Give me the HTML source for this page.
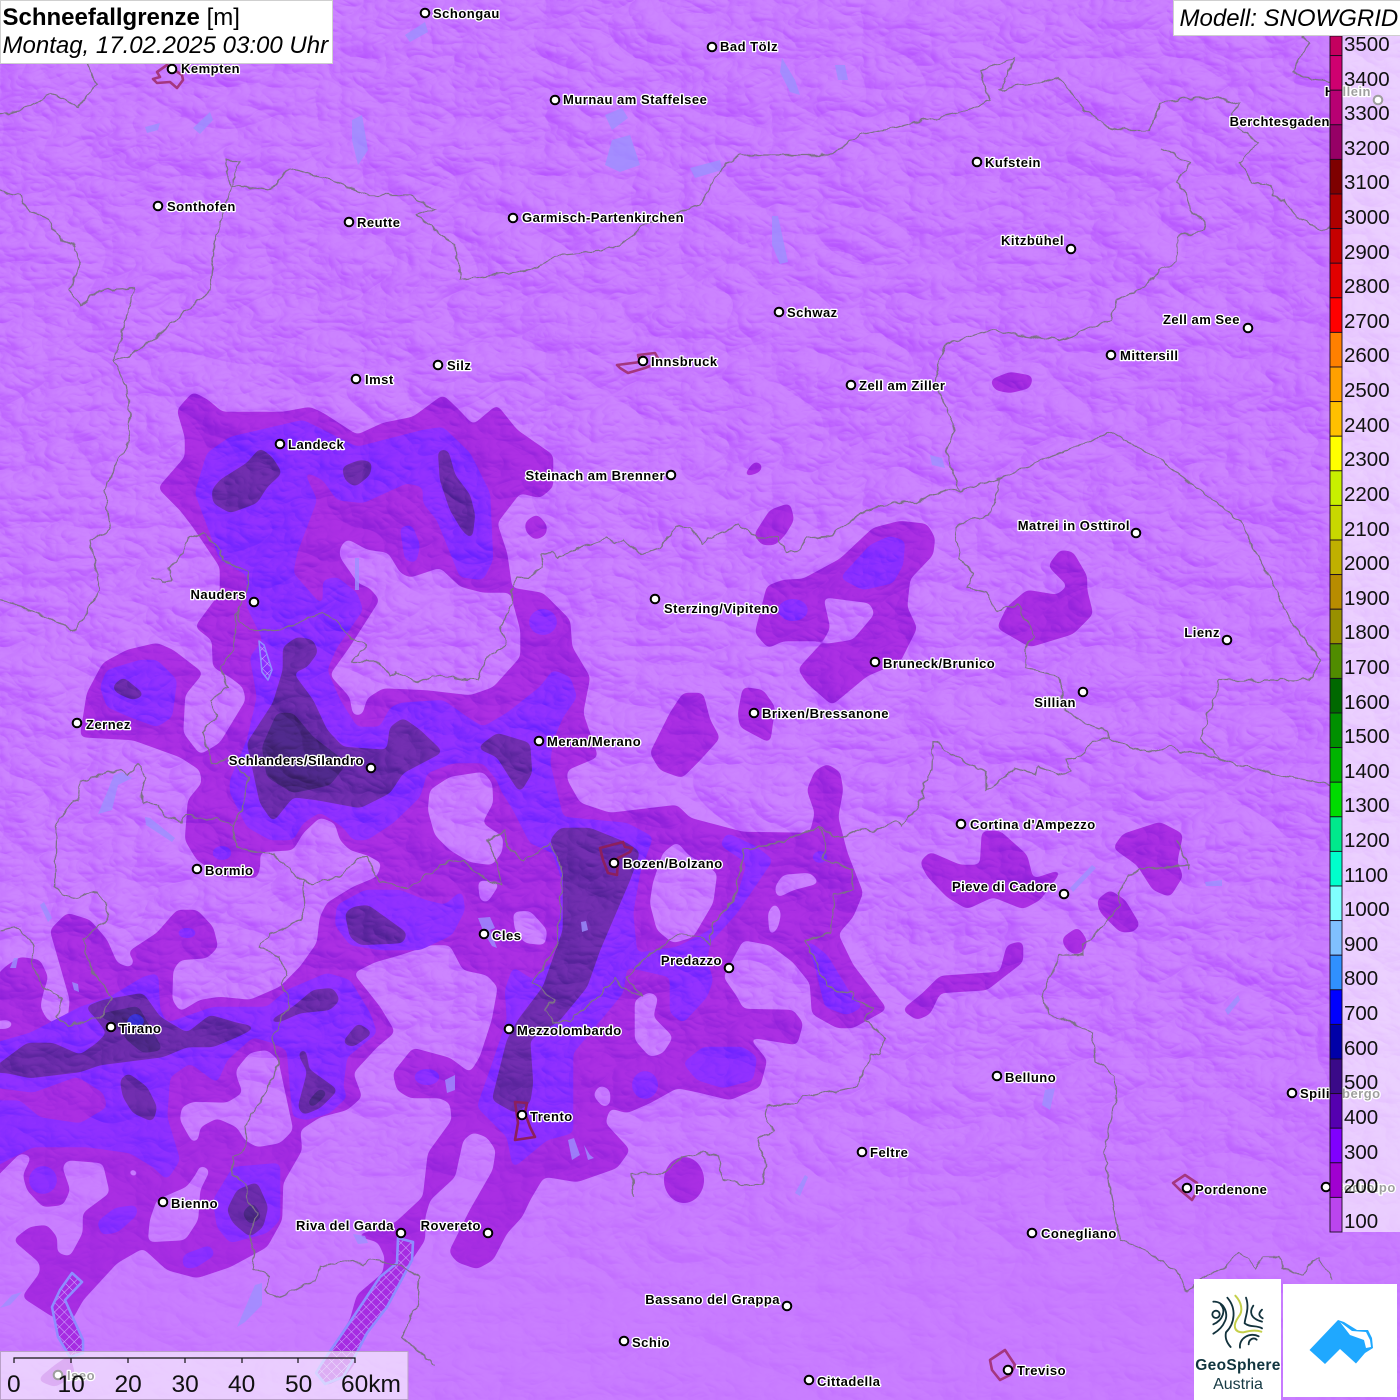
<!DOCTYPE html>
<html><head><meta charset="utf-8"><title>Schneefallgrenze</title>
<style>
html,body{margin:0;padding:0;background:#c87bff;width:1400px;height:1400px;overflow:hidden}
svg{display:block;font-family:"Liberation Sans",sans-serif}
.c text{font:bold 13px "Liberation Sans",sans-serif;letter-spacing:.5px;fill:#000;stroke:#fff;stroke-width:2.6px;paint-order:stroke;stroke-linejoin:round}
.d circle{fill:#fff;stroke:#000;stroke-width:2;r:4.3px}
.b{fill:none;stroke:#7d7088;stroke-width:1.25;stroke-linejoin:round}
.t{fill:none;stroke:#a4367f;stroke-width:2.6;stroke-linejoin:round}
.l{fill:#9c90ff;opacity:.8}
</style></head><body>
<svg width="1400" height="1400" viewBox="0 0 1400 1400" xmlns="http://www.w3.org/2000/svg">
<defs>
<filter id="g" filterUnits="userSpaceOnUse" x="-20" y="-20" width="1440" height="1440" color-interpolation-filters="sRGB">
<feGaussianBlur stdDeviation="3.1"/>
<feColorMatrix values="1 0 0 0 0 0 1 0 0 0 0 0 1 0 0 0 0 0 16 -7"/>
</filter>
<filter id="h" filterUnits="userSpaceOnUse" x="0" y="0" width="1400" height="1400" color-interpolation-filters="sRGB">
<feTurbulence type="turbulence" baseFrequency="0.011 0.017" numOctaves="4" seed="11" result="n"/>
<feDiffuseLighting in="n" surfaceScale="11" diffuseConstant="1" lighting-color="#9c9c9c"><feDistantLight azimuth="315" elevation="55"/></feDiffuseLighting>
</filter>
<filter id="j" filterUnits="userSpaceOnUse" x="-10" y="-10" width="1420" height="1420">
<feTurbulence type="fractalNoise" baseFrequency="0.09" numOctaves="2" seed="3" result="w"/>
<feDisplacementMap in="SourceGraphic" in2="w" scale="7" xChannelSelector="R" yChannelSelector="G"/>
</filter>
<linearGradient id="fade" x1="0" y1="0" x2="0" y2="1"><stop offset="0" stop-color="#fff"/><stop offset=".72" stop-color="#fff"/><stop offset=".92" stop-color="#555"/></linearGradient>
<mask id="m"><rect width="1400" height="1400" fill="url(#fade)"/></mask>
<pattern id="x" width="7" height="7" patternUnits="userSpaceOnUse" patternTransform="rotate(45)">
<path d="M0 0H7M0 0V7" stroke="#d0b0ff" stroke-width="1" fill="none"/></pattern>
</defs>

<rect width="1400" height="1400" fill="#c87bff"/>

<!-- 200 level -->
<g fill="#a62ce2" filter="url(#g)">
<polygon points="177,410 193,392 208,400 222,412 283,412 310,407 323,413 357,435 383,423 413,417 443,395 457,408 473,425 497,405 517,430 553,455 553,487 540,498 520,493 497,523 507,553 512,588 543,593 570,620 572,647 590,677 583,713 598,757 567,770 567,780 580,803 610,813 677,805 690,818 743,832 810,833 815,813 807,790 815,771 827,764 840,772 843,790 838,817 847,852 863,893 853,917 838,934 853,965 887,1009 853,1028 837,1028 812,1014 810,983 793,962 770,945 743,940 723,977 737,997 743,1009 793,1010 803,1023 797,1045 748,1037 767,1060 760,1087 730,1100 697,1092 677,1088 650,1103 627,1113 610,1108 605,1123 630,1150 617,1168 577,1182 547,1177 543,1178 530,1200 522,1217 507,1233 493,1260 477,1269 457,1262 449,1252 470,1210 493,1170 496,1150 487,1137 473,1132 463,1140 458,1163 455,1177 430,1200 425,1217 425,1240 407,1267 390,1292 367,1335 350,1355 325,1358 350,1320 357,1295 383,1273 385,1257 378,1242 353,1235 368,1232 395,1223 423,1197 428,1153 452,1120 450,1103 440,1098 410,1098 397,1090 393,1073 413,1048 450,1058 470,1073 480,1057 492,1020 498,987 487,975 463,970 450,945 430,945 400,955 375,962 353,973 380,1007 395,1032 377,1047 353,1073 362,1097 347,1110 320,1117 300,1130 302,1150 283,1183 282,1220 267,1247 230,1267 197,1278 167,1270 143,1248 117,1263 83,1300 72,1320 53,1317 22,1297 40,1273 40,1263 13,1240 30,1227 47,1225 57,1237 57,1253 70,1257 83,1233 83,1213 110,1193 103,1163 67,1160 62,1167 70,1190 63,1205 43,1207 27,1190 23,1175 32,1156 20,1153 -12,1185 -12,985 5,967 20,957 40,960 48,977 43,993 40,1007 47,1020 67,1028 70,1000 60,965 50,930 67,913 90,920 107,940 117,963 130,968 135,962 128,952 157,933 177,910 197,910 213,927 218,947 207,958 180,960 173,970 172,1000 180,1012 200,1000 220,997 250,1000 280,987 300,967 317,943 320,917 327,903 353,887 377,877 382,863 367,855 350,850 340,840 335,823 320,817 303,833 293,850 260,852 260,867 257,878 223,877 197,860 185,840 188,800 202,783 200,770 180,757 133,740 80,737 87,693 103,663 127,650 157,643 173,650 203,673 185,695 183,733 200,755 220,743 246,700 243,687 230,677 213,667 212,640 195,627 220,593 220,567 193,527 180,510 158,488 185,457 185,437"/>
<polygon points="537,514 547,525 546,535 535,540 526,532 525,522"/>
<polygon points="412,640 425,625 433,633 425,643 415,645"/>
<polygon points="990,380 1010,372 1033,376 1030,388 1010,393 995,390"/>
<polygon points="743,476 755,461 763,465 760,472 745,477"/>
<polygon points="754,535 770,510 790,503 794,520 785,535 775,545 762,545"/>
<polygon points="650,753 670,713 683,693 703,693 710,720 720,738 700,760 682,778 660,770"/>
<polygon points="738,713 743,687 763,690 775,707 770,743 740,727"/>
<polygon points="755,633 767,586 783,580 803,579 840,559 873,528 900,521 927,524 935,538 933,555 910,579 907,607 917,628 900,662 867,676 832,705 807,683 798,669 820,645 853,640 875,614 870,603 823,597 830,628 823,641 783,641 768,648"/>
<polygon points="1048,566 1060,550 1073,552 1087,576 1087,590 1093,614 1073,634 1030,647 997,628 1007,607 1027,590 1057,595 1068,586"/>
<polygon points="920,862 930,852 960,865 980,865 982,831 1000,831 1027,855 1033,879 1063,869 1040,900 1023,909 993,897 967,909 947,897 927,876"/>
<polygon points="1113,848 1123,834 1160,822 1183,834 1177,862 1183,876 1170,897 1153,890 1137,865"/>
<polygon points="1097,900 1110,890 1125,900 1140,925 1133,932 1120,932 1100,912"/>
<polygon points="1062,938 1078,927 1087,940 1085,950 1075,955 1065,948"/>
<polygon points="902,1010 923,993 940,976 1000,972 1007,945 1023,941 1023,962 987,990 940,993 930,1014 917,1020"/>
<ellipse cx="684" cy="1180" rx="20" ry="23"/>
<polygon points="37,1380 55,1365 70,1355 75,1375 55,1387"/>
<polygon points="316,1368 345,1350 357,1360 345,1377 325,1386"/>
</g>
<!-- holes in 200 -->
<g fill="#c87bff" filter="url(#g)">
<polygon points="340,548 347,539 367,550 388,553 400,573 410,578 440,568 460,587 483,593 510,593 520,630 520,657 493,687 470,695 427,690 383,688 367,698 362,715 353,715 350,697 330,675 350,647 380,600 370,588 358,583 340,557"/>
<polygon points="428,810 430,790 450,777 483,772 492,783 493,803 482,823 503,837 502,852 492,865 470,862 450,850 435,835"/>
<polygon points="478,880 500,883 487,903 480,900"/>
<polygon points="513,912 530,911 547,930 545,945 525,943 515,930"/>
<polygon points="650,903 653,883 663,853 677,842 688,855 717,873 713,903 693,937 673,943 657,930"/>
<polygon points="635,1000 650,992 658,997 653,1017 673,1037 663,1053 650,1057 635,1040"/>
<polygon points="593,1095 600,1085 610,1090 610,1105 603,1107"/>
<polygon points="775,887 783,875 810,873 820,883 793,890 777,898"/>
<polygon points="768,913 775,902 781,913 778,927 770,938"/>
<polygon points="127,1172 133,1168 140,1175 133,1177"/>
<polygon points="236,1070 250,1053 267,1050 278,1060 293,1130 280,1143 257,1147 245,1140 237,1127 217,1118 200,1127 198,1140 193,1143 180,1120 182,1107 193,1102 227,1103 243,1093 237,1077"/>
<polygon points="200,1165 210,1170 200,1190 198,1220 185,1240 148,1242 150,1220 157,1200 187,1187 197,1173"/>
<polygon points="-12,1022 10,1020 14,1026 5,1029 -12,1028"/>
</g>
<!-- 300 level -->
<g fill="#8a2eff" filter="url(#g)">
<polygon points="195,493 207,453 230,437 303,420 357,447 423,430 443,427 470,453 490,493 493,560 483,580 460,577 437,520 423,503 423,487 407,483 363,503 337,500 323,480 303,470 317,500 297,553 293,573 323,607 323,580 337,577 357,593 363,610 340,643 337,647 327,670 340,700 357,727 380,727 390,708 400,703 443,700 467,717 483,727 507,713 540,687 553,670 570,677 577,697 563,717 553,740 550,763 563,817 627,823 653,837 640,873 633,913 637,953 677,947 710,930 737,897 747,863 720,845 727,833 757,847 773,860 737,913 710,943 707,960 713,980 707,997 683,1023 670,1013 670,977 627,967 623,993 590,1033 573,1053 573,1133 547,1140 513,1168 507,1137 477,1107 490,1070 507,1020 505,990 513,967 533,980 557,957 560,913 562,880 553,853 530,843 503,790 510,813 497,780 483,763 453,763 427,773 420,797 393,823 367,840 353,840 343,827 320,812 303,823 293,840 270,840 247,827 230,793 230,780 247,740 257,697 250,657 263,640 247,607 247,575 220,560"/>
<polygon points="337,905 365,890 400,890 425,900 445,905 462,890 465,910 452,935 420,950 380,950 350,945 335,925"/>
<polygon points="400,527 412,525 420,545 416,563 405,560"/>
<polygon points="100,687 107,670 140,660 157,660 177,680 172,717 157,727 130,717 107,707"/>
<ellipse cx="222" cy="853" rx="10" ry="7"/>
<ellipse cx="543" cy="622" rx="14" ry="13"/>
<polygon points="840,578 870,545 890,536 905,541 903,565 893,583 863,590"/>
<ellipse cx="793" cy="610" rx="15" ry="11"/>
<polygon points="805,938 827,955 850,993 863,1007 847,1015 825,1007 815,966"/>
<polygon points="683,1063 703,1047 743,1047 757,1057 753,1080 723,1088 697,1080"/>
<ellipse cx="645" cy="1085" rx="13" ry="14"/>
<ellipse cx="820" cy="857" rx="8" ry="6"/>
<polygon points="-12,1045 30,1033 80,1007 110,997 143,977 158,973 160,1010 167,1023 213,1007 267,1007 287,990 327,973 350,980 370,1013 377,1033 347,1057 343,1087 347,1097 330,1113 307,1120 293,1117 290,1087 287,1050 273,1043 253,1037 227,1060 217,1083 190,1063 170,1077 167,1117 180,1160 167,1180 153,1167 130,1153 87,1147 33,1147 -12,1170"/>
<polygon points="213,1200 233,1167 280,1163 280,1220 267,1233 230,1243 217,1227"/>
<polygon points="97,1222 115,1208 137,1205 137,1215 118,1232 102,1235"/>
<ellipse cx="43" cy="1180" rx="14" ry="14"/>
<polygon points="183,1255 210,1245 215,1255 195,1268 183,1268"/>
<ellipse cx="187" cy="933" rx="10" ry="5"/>
<ellipse cx="427" cy="1077" rx="13" ry="8"/>
</g>
<g fill="#a62ce2" filter="url(#g)">
<polygon points="-12,1087 33,1093 77,1077 103,1093 107,1107 80,1123 40,1117 20,1100 -12,1100"/>
</g>
<!-- 400 level -->
<g fill="#6b2bab" filter="url(#g)">
<polygon points="212,490 220,480 247,463 260,448 272,457 282,473 267,487 257,503 230,513 213,503"/>
<polygon points="342,467 360,460 372,462 370,475 355,487 345,480"/>
<polygon points="438,450 448,450 455,475 470,495 475,515 472,540 462,530 450,510 440,480"/>
<polygon points="283,647 297,637 313,640 318,652 307,667 293,673 313,700 327,730 343,747 387,750 390,727 403,718 420,730 443,752 403,773 390,793 360,808 317,800 293,797 273,822 260,803 247,743 273,703 283,670"/>
<polygon points="477,748 497,733 530,743 532,773 520,793 507,773 497,757"/>
<polygon points="550,840 560,828 590,828 627,843 640,852 630,880 600,950 587,987 560,1020 530,1040 533,1083 530,1103 515,1113 492,1100 507,1040 518,1020 543,987 563,930 563,873"/>
<polygon points="345,913 353,907 368,905 407,933 403,943 360,945 350,937"/>
<polygon points="-12,1072 27,1043 53,1043 80,1055 97,1043 107,1033 95,1017 85,1007 103,1000 143,993 160,1017 187,1033 210,1015 237,1023 257,1027 237,1037 213,1047 187,1047 163,1057 100,1065 80,1072 30,1078 7,1073"/>
<polygon points="120,1080 128,1073 147,1087 157,1107 153,1122 133,1113 123,1097"/>
<polygon points="265,1023 293,1007 313,990 333,988 340,1000 330,1010 300,1013 280,1022"/>
<polygon points="342,1043 358,1023 373,1033 353,1047"/>
<polygon points="298,1107 307,1073 298,1053 305,1048 310,1070 338,1090 320,1108 303,1115"/>
<polygon points="227,1210 237,1190 257,1182 268,1207 263,1227 250,1237 233,1223"/>
<polygon points="112,687 123,677 145,695 133,700 117,693"/>
</g>
<!-- 500 level -->
<g fill="#4b2785" filter="url(#g)">
<polygon points="262,747 277,713 293,713 313,737 347,763 330,785 293,793 267,777"/>
<polygon points="95,1015 138,1006 163,1050 143,1053 127,1040 115,1023"/>
<polygon points="307,1103 320,1088 328,1093 312,1108"/>
<polygon points="242,1213 253,1202 262,1217 250,1225"/>
</g>
<g fill="#3a30d4" filter="url(#g)"><polygon points="125,1023 132,1014 140,1014 146,1023 135,1029"/></g>

<!-- hillshade -->
<rect width="1400" height="1400" filter="url(#h)" opacity=".34" mask="url(#m)" style="mix-blend-mode:overlay"/>

<!-- lakes -->
<g class="l">
<polygon points="145,127 160,123 158,130 147,133"/><polygon points="193,128 210,112 213,120 200,134"/>
<polygon points="352,120 362,115 368,150 358,165 352,140"/><polygon points="605,165 612,140 630,135 640,165 620,172"/>
<polygon points="605,115 622,108 628,118 612,130"/><polygon points="782,58 795,80 800,95 790,92 780,72"/>
<polygon points="835,65 845,65 848,80 838,80"/><polygon points="690,168 720,160 722,170 695,178"/>
<polygon points="772,216 778,216 788,262 780,264 772,245"/><polygon points="405,35 425,22 428,32 410,42"/>
<polygon points="930,455 942,458 945,468 932,465"/><polygon points="1092,865 1096,868 1073,892 1070,888"/>
<polygon points="1045,1090 1055,1088 1050,1110 1042,1105"/><polygon points="1225,1010 1238,995 1240,1000 1228,1015"/>
<polygon points="1205,882 1222,880 1222,886 1206,886"/><polygon points="355,558 359,558 359,590 355,590"/>
<polygon points="114,775 122,772 132,778 118,785 112,810 98,814 108,790"/><polygon points="145,817 150,818 175,838 172,842 146,825"/>
<polygon points="40,905 44,902 52,918 48,922"/><polygon points="795,1193 805,1175 808,1177 800,1196"/>
<polygon points="237,1327 255,1285 262,1283 262,1305 245,1322"/><polygon points="0,1308 12,1295 22,1292 10,1305"/>
<polygon points="478,918 490,917 495,928 490,930 497,948 492,946 484,933"/>
<polygon points="581,922 586,921 588,930 582,932"/><polygon points="568,1140 574,1138 580,1155 572,1160"/>
<polygon points="584,1145 590,1155 594,1158 588,1160"/><polygon points="353,1234 365,1236 368,1243 358,1244"/>
<polygon points="14,958 18,958 16,968 10,968"/><polygon points="72,982 78,984 79,992 74,990"/>
<polygon points="445,1080 455,1075 455,1090 447,1093"/>
</g>
<g fill="#a62ce2">
<polygon points="398,1238 413,1242 412,1260 387,1307 367,1333 353,1360 343,1377 325,1384 316,1373 322,1363 333,1347 350,1322 368,1295 380,1277 397,1263"/>
<polygon points="72,1273 82,1282 65,1300 83,1340 83,1353 70,1357 58,1337 52,1307 60,1290"/>
</g>
<g stroke="#8f8cff" stroke-width="2.6" stroke-linejoin="round" fill="url(#x)">
<polygon points="398,1238 413,1242 412,1260 387,1307 367,1333 353,1360 343,1377 325,1384 316,1373 322,1363 333,1347 350,1322 368,1295 380,1277 397,1263"/>
<polygon points="72,1273 82,1282 65,1300 83,1340 83,1353 70,1357 58,1337 52,1307 60,1290"/>
<polygon points="259,641 264,645 272,670 268,680 262,672" stroke-width="1.6"/>
</g>

<!-- borders -->
<g class="b" filter="url(#j)">
<polyline points="0,190 20,195 30,212 50,220 60,240 75,245 80,265 70,290 80,305 100,290 135,288 130,300 115,360 130,400 128,440 105,490 110,530 90,540 100,590 75,630 30,610 0,600"/>
<polyline points="115,360 130,355 165,330 210,290 215,240 225,205 240,160 225,160 230,185 270,190 290,170 330,180 370,195 410,195 435,210 415,215 455,245 460,280 530,270 560,255 600,250 620,245 645,225 700,205 720,170 740,155 830,155 860,135 970,110 990,100 980,70 1015,58 1000,90 1055,78 1065,85 1085,110 1115,130 1150,130 1160,103 1193,98 1220,98 1240,105 1232,113 1237,127 1258,143 1240,163 1253,183 1270,185 1273,197 1283,200 1297,217 1323,230 1330,227"/>
<polyline points="1303,37 1310,43 1293,70 1303,78 1330,81"/>
<polyline points="1160,148 1190,163 1175,183 1185,190 1190,210 1205,223 1203,230 1177,237 1177,260 1160,272 1140,290 1115,300 1112,320 1060,340 990,330 945,345 935,380 955,430 945,450 960,490 1000,478 995,500 990,515 970,519 955,528 960,559 973,572 967,588 987,593 997,612 1017,603 1030,628 1035,638 1025,648 1025,669 1057,676 1065,710 1087,724 1107,731 1110,738 1148,753 1170,747 1180,753 1190,750 1220,760 1280,775 1330,785"/>
<polyline points="87,63 97,85 87,97 77,107 63,98 50,95 27,108 0,115"/>
<polyline points="1000,478 1080,445 1110,432 1160,460 1200,490 1240,520 1290,620 1320,660 1310,680 1220,680 1200,740 1220,760"/>
<polyline points="512,587 517,577 528,578 542,568 540,555 552,552 558,557 582,547 607,538 615,543 623,538 640,555 660,548 667,537 677,526 690,528 702,543 720,533 740,525 757,537 777,537 787,552 800,550 808,538 833,534 867,510 893,502 915,502 945,490 960,490"/>
<polyline points="150,578 165,583 173,580 168,568 178,562 187,539 203,533 220,550 222,560 248,573 247,593 238,607 240,623 250,630 277,630 293,625 323,613 337,620 350,637 367,645 352,662 377,662 390,675 397,672 417,682 433,675 478,680 487,657 505,645 500,627 512,603 512,588"/>
<polyline points="238,607 233,650 220,667 227,687 210,702 217,715 203,732 212,763 230,760 248,777 243,810 232,827 217,818 207,820 188,815 183,822 165,817 160,805 143,803 142,790 146,778 138,765 128,775 120,770 80,782 78,800 72,802 57,823 55,887 63,895 78,898 95,892 107,903 107,920 83,940 90,967 112,998 100,1017 68,1025 57,1018 62,1000 43,988 32,967 33,943 15,927 0,930"/>
<polyline points="232,827 237,847 250,852 273,853 303,882 312,885 343,875 358,858 367,857 380,883 407,888 450,860 463,860 482,877 502,885 492,848 487,840 505,832 507,847 525,862 550,843 563,867 560,913 557,947 532,983 555,1000 545,1010 553,1023 570,1020 603,993 615,978 622,988 642,997 625,977 643,960 667,943 677,935 700,938 710,945 713,923 733,900 742,863 745,850 780,842 820,828 827,843 822,858 853,870 853,890 835,893 830,933 805,940 827,987 853,993 853,1000 872,1008 865,1020 885,1038 880,1055 872,1053 857,1087 803,1097 797,1102 767,1105 765,1117 773,1130 758,1140 767,1168 763,1183 742,1185 735,1182 723,1180 718,1157 703,1153 682,1157 663,1173 632,1173 633,1197"/>
<polyline points="303,882 305,907 300,920 273,933 260,942 260,947 280,958 287,975 280,985 288,997 288,1010 273,1037 278,1063 273,1080 245,1127 247,1147 233,1157 232,1175 248,1183 248,1202 257,1213 250,1233 255,1250 253,1268 270,1277 265,1290 280,1297 317,1280 320,1267 347,1260 363,1265 370,1260 400,1265 420,1278 418,1300 410,1320 402,1337 435,1365"/>
<polyline points="1110,736 1093,741 1077,759 1067,760 1070,771 1057,774 1040,767 1035,774 1015,769 990,788 987,790 987,772 967,764 933,741 932,769 923,783 923,797 903,826 897,821 873,831 863,828 840,838 820,828"/>
<polyline points="1190,865 1140,869 1130,876 1117,895 1120,905 1100,928 1083,945 1083,955 1060,955 1042,997 1048,1014 1077,1024 1093,1033 1095,1060 1115,1075 1115,1100 1105,1150 1110,1185 1120,1240 1145,1250 1160,1260 1180,1275 1187,1292 1207,1273 1223,1270 1238,1253 1248,1260 1255,1270 1263,1257 1280,1257 1282,1270 1292,1270 1303,1275 1313,1260 1320,1258 1327,1273 1332,1280"/>
<polyline points="1177,840 1190,869"/>
</g>

<!-- city outlines -->
<g class="t">
<polygon points="167,65 157,72 160,77 153,79 157,83 170,82 177,88 183,80 182,75"/>
<polygon points="617,365 640,362 638,355 655,353 660,362 645,368 628,373 620,368"/>
<polygon points="1173,1183 1185,1175 1197,1183 1195,1195 1192,1200 1180,1190"/>
<polygon points="990,1360 1005,1350 1015,1365 1010,1375 1000,1380 992,1370"/>
<g stroke="#8c1f5e"><polygon points="600,848 623,842 625,847 632,848 630,852 618,858 617,875 608,873 603,860"/>
<polygon points="515,1102 527,1103 525,1113 530,1127 535,1137 515,1140 518,1123"/></g>
</g>

<!-- labels -->
<g class="c">
<text x="433" y="18">Schongau</text><text x="720" y="51">Bad Tölz</text><text x="181" y="73">Kempten</text>
<text x="563" y="104">Murnau am Staffelsee</text><text x="1371" y="96" text-anchor="end">Hallein</text>
<text x="1330" y="126" text-anchor="end">Berchtesgaden</text><text x="985" y="167">Kufstein</text>
<text x="167" y="211">Sonthofen</text><text x="357" y="227">Reutte</text><text x="522" y="222">Garmisch-Partenkirchen</text>
<text x="1064" y="245" text-anchor="end">Kitzbühel</text><text x="787" y="317">Schwaz</text>
<text x="1240" y="324" text-anchor="end">Zell am See</text><text x="1120" y="360">Mittersill</text>
<text x="447" y="370">Silz</text><text x="365" y="384">Imst</text><text x="651" y="366">Innsbruck</text>
<text x="859" y="390">Zell am Ziller</text><text x="288" y="449">Landeck</text>
<text x="665" y="480" text-anchor="end">Steinach am Brenner</text><text x="1130" y="530" text-anchor="end">Matrei in Osttirol</text>
<text x="246" y="599" text-anchor="end">Nauders</text><text x="664" y="613">Sterzing/Vipiteno</text>
<text x="1220" y="637" text-anchor="end">Lienz</text><text x="883" y="668">Bruneck/Brunico</text>
<text x="1076" y="707" text-anchor="end">Sillian</text><text x="762" y="718">Brixen/Bressanone</text>
<text x="86" y="729">Zernez</text><text x="547" y="746">Meran/Merano</text>
<text x="364" y="765" text-anchor="end">Schlanders/Silandro</text><text x="970" y="829">Cortina d'Ampezzo</text>
<text x="623" y="868">Bozen/Bolzano</text><text x="205" y="875">Bormio</text>
<text x="1057" y="891" text-anchor="end">Pieve di Cadore</text><text x="492" y="940">Cles</text>
<text x="722" y="965" text-anchor="end">Predazzo</text><text x="119" y="1033">Tirano</text>
<text x="517" y="1035">Mezzolombardo</text><text x="1005" y="1082">Belluno</text>
<text x="1300" y="1098">Spilimbergo</text><text x="530" y="1121">Trento</text><text x="870" y="1157">Feltre</text>
<text x="1195" y="1194">Pordenone</text><text x="1334" y="1192">Codroipo</text><text x="171" y="1208">Bienno</text>
<text x="394" y="1230" text-anchor="end">Riva del Garda</text><text x="481" y="1230" text-anchor="end">Rovereto</text>
<text x="1041" y="1238">Conegliano</text><text x="780" y="1304" text-anchor="end">Bassano del Grappa</text>
<text x="632" y="1347">Schio</text><text x="1017" y="1375">Treviso</text><text x="817" y="1386">Cittadella</text>
<text x="67" y="1380">Iseo</text>
</g>
<g class="d">
<circle cx="425" cy="13" r="4"/><circle cx="712" cy="47" r="4"/><circle cx="172" cy="69" r="4"/><circle cx="555" cy="100" r="4"/>
<circle cx="1378" cy="100" r="4"/><circle cx="977" cy="162" r="4"/><circle cx="158" cy="206" r="4"/><circle cx="349" cy="222" r="4"/>
<circle cx="513" cy="218" r="4"/><circle cx="1071" cy="249" r="4"/><circle cx="779" cy="312" r="4"/><circle cx="1248" cy="328" r="4"/>
<circle cx="1111" cy="355" r="4"/><circle cx="438" cy="365" r="4"/><circle cx="356" cy="379" r="4"/><circle cx="643" cy="361" r="4"/>
<circle cx="851" cy="385" r="4"/><circle cx="280" cy="444" r="4"/><circle cx="671" cy="475" r="4"/><circle cx="1136" cy="533" r="4"/>
<circle cx="254" cy="602" r="4"/><circle cx="655" cy="599" r="4"/><circle cx="1227" cy="640" r="4"/><circle cx="875" cy="662" r="4"/>
<circle cx="1083" cy="692" r="4"/><circle cx="754" cy="713" r="4"/><circle cx="77" cy="723" r="4"/><circle cx="539" cy="741" r="4"/>
<circle cx="371" cy="768" r="4"/><circle cx="961" cy="824" r="4"/><circle cx="614" cy="863" r="4"/><circle cx="197" cy="869" r="4"/>
<circle cx="1064" cy="894" r="4"/><circle cx="484" cy="934" r="4"/><circle cx="729" cy="968" r="4"/><circle cx="111" cy="1027" r="4"/>
<circle cx="509" cy="1029" r="4"/><circle cx="997" cy="1076" r="4"/><circle cx="1292" cy="1093" r="4"/><circle cx="522" cy="1115" r="4"/>
<circle cx="862" cy="1152" r="4"/><circle cx="1187" cy="1188" r="4"/><circle cx="1326" cy="1187" r="4"/><circle cx="163" cy="1202" r="4"/>
<circle cx="401" cy="1233" r="4"/><circle cx="488" cy="1233" r="4"/><circle cx="1032" cy="1233" r="4"/><circle cx="787" cy="1306" r="4"/>
<circle cx="624" cy="1341" r="4"/><circle cx="1008" cy="1370" r="4"/><circle cx="809" cy="1380" r="4"/><circle cx="58" cy="1375" r="4"/>
</g>

<!-- legend -->
<rect x="1330" y="36" width="70" height="1196" fill="#fff" fill-opacity=".62"/>
<g stroke="#1a0a20" stroke-width=".9">
<rect x="1330" y="36" width="12" height="19.6" fill="#c4005f"/>
<rect x="1330" y="55.6" width="12" height="34.6" fill="#cf0070"/>
<rect x="1330" y="90.2" width="12" height="34.6" fill="#b80073"/>
<rect x="1330" y="124.8" width="12" height="34.6" fill="#960066"/>
<rect x="1330" y="159.4" width="12" height="34.6" fill="#7e0000"/>
<rect x="1330" y="194" width="12" height="34.6" fill="#ae0000"/>
<rect x="1330" y="228.6" width="12" height="34.6" fill="#c60000"/>
<rect x="1330" y="263.2" width="12" height="34.6" fill="#e20000"/>
<rect x="1330" y="297.8" width="12" height="34.6" fill="#ff0000"/>
<rect x="1330" y="332.4" width="12" height="34.6" fill="#ff8000"/>
<rect x="1330" y="367" width="12" height="34.6" fill="#ffa000"/>
<rect x="1330" y="401.6" width="12" height="34.6" fill="#ffc000"/>
<rect x="1330" y="436.2" width="12" height="34.6" fill="#ffff00"/>
<rect x="1330" y="470.8" width="12" height="34.6" fill="#c8f000"/>
<rect x="1330" y="505.4" width="12" height="34.6" fill="#c8d800"/>
<rect x="1330" y="540" width="12" height="34.6" fill="#c0b000"/>
<rect x="1330" y="574.6" width="12" height="34.6" fill="#b88c00"/>
<rect x="1330" y="609.2" width="12" height="34.6" fill="#989000"/>
<rect x="1330" y="643.8" width="12" height="34.6" fill="#508c00"/>
<rect x="1330" y="678.4" width="12" height="34.6" fill="#006800"/>
<rect x="1330" y="713" width="12" height="34.6" fill="#009000"/>
<rect x="1330" y="747.6" width="12" height="34.6" fill="#00b400"/>
<rect x="1330" y="782.2" width="12" height="34.6" fill="#00dc00"/>
<rect x="1330" y="816.8" width="12" height="34.6" fill="#00e88c"/>
<rect x="1330" y="851.4" width="12" height="34.6" fill="#00ffcc"/>
<rect x="1330" y="886" width="12" height="34.6" fill="#80ffff"/>
<rect x="1330" y="920.6" width="12" height="34.6" fill="#80c0ff"/>
<rect x="1330" y="955.2" width="12" height="34.6" fill="#3090ff"/>
<rect x="1330" y="989.8" width="12" height="34.6" fill="#0000ff"/>
<rect x="1330" y="1024.4" width="12" height="34.6" fill="#0000a8"/>
<rect x="1330" y="1059" width="12" height="34.6" fill="#3a0a88"/>
<rect x="1330" y="1093.6" width="12" height="34.6" fill="#5500b0"/>
<rect x="1330" y="1128.2" width="12" height="34.6" fill="#8000ff"/>
<rect x="1330" y="1162.8" width="12" height="34.6" fill="#a000d0"/>
<rect x="1330" y="1197.4" width="12" height="34.6" fill="#bb45ee"/>
</g>
<g font-size="20.5" fill="#111">
<text x="1344" y="51">3500</text><text x="1344" y="86">3400</text><text x="1344" y="120">3300</text><text x="1344" y="155">3200</text><text x="1344" y="189">3100</text><text x="1344" y="224">3000</text><text x="1344" y="259">2900</text><text x="1344" y="293">2800</text><text x="1344" y="328">2700</text><text x="1344" y="362">2600</text><text x="1344" y="397">2500</text><text x="1344" y="432">2400</text><text x="1344" y="466">2300</text><text x="1344" y="501">2200</text><text x="1344" y="536">2100</text><text x="1344" y="570">2000</text><text x="1344" y="605">1900</text><text x="1344" y="639">1800</text><text x="1344" y="674">1700</text><text x="1344" y="709">1600</text><text x="1344" y="743">1500</text><text x="1344" y="778">1400</text><text x="1344" y="812">1300</text><text x="1344" y="847">1200</text><text x="1344" y="882">1100</text><text x="1344" y="916">1000</text><text x="1344" y="951">900</text><text x="1344" y="985">800</text><text x="1344" y="1020">700</text><text x="1344" y="1055">600</text><text x="1344" y="1089">500</text><text x="1344" y="1124">400</text><text x="1344" y="1159">300</text><text x="1344" y="1193">200</text><text x="1344" y="1228">100</text>
</g>

<!-- title -->
<rect x=".5" y=".5" width="332" height="63" fill="#fff" stroke="#cfcfcf"/>
<text x="2.500" y="25" font-size="24" fill="#000"><tspan font-weight="bold">Schneefallgrenze</tspan> [m]</text>
<text x="2.500" y="53" font-size="24" font-style="italic" fill="#000">Montag, 17.02.2025 03:00 Uhr</text>
<rect x="1173.5" y=".5" width="227" height="35" fill="#fff" stroke="#cfcfcf"/>
<text x="1179.500" y="26" font-size="24" font-style="italic" fill="#000">Modell: SNOWGRID</text>

<!-- scale -->
<rect x=".5" y="1351.5" width="407.500" height="48" fill="#fff" fill-opacity=".62" stroke="#b9a0c8"/>
<path d="M14 1363V1358H355V1363M71 1358V1363M128 1358V1363M185 1358V1363M242 1358V1363M298 1358V1363" fill="none" stroke="#111" stroke-width="1.2"/>
<g font-size="24.5" fill="#111">
<text x="7" y="1392">0</text><text x="57.500" y="1392">10</text><text x="114.500" y="1392">20</text><text x="171.500" y="1392">30</text><text x="228" y="1392">40</text><text x="285" y="1392">50</text><text x="341" y="1392">60km</text>
</g>

<!-- logos -->
<rect x="1194" y="1279" width="87" height="121" fill="#fff"/>
<rect x="1283" y="1284" width="114" height="113" fill="#fff"/>
<g transform="translate(1190,1275) scale(.33333)" fill="none" stroke="#12323c" stroke-width="5.5" stroke-linecap="round">
<path d="M136 62C155 82 160 108 146 125C128 150 130 172 160 172C185 165 200 165 214 170" stroke="#c4cf4a" stroke-width="6"/>
<circle cx="78" cy="118" r="11"/>
<path d="M92 88C108 105 100 135 70 148"/>
<path d="M70 80C100 78 118 115 104 140 C96 160 80 170 70 176"/>
<path d="M112 68C140 100 135 145 108 172C104 190 112 205 122 216"/>
<path d="M168 68C180 100 164 130 164 145 C180 158 200 150 216 160"/>
<path d="M190 92C178 110 180 130 216 140"/>
<path d="M216 104C205 115 205 122 218 130"/>
<path d="M150 218C146 190 180 170 206 184"/>
<path d="M176 208C176 192 192 186 200 194"/>
</g>
<path d="M1309.500 1350 L1338 1320 L1344 1322 L1357 1330 L1368 1330 L1372 1338 L1373 1348 L1365 1353 L1356 1363.500 L1340 1349 L1325 1364 Z" fill="#1fa8ff"/>
<path d="M1340 1322 L1352 1331 L1366 1332 L1370 1340 L1371 1347 L1366 1348 L1364 1340 L1350 1335 Z" fill="#fff"/>
<text x="1238" y="1370" text-anchor="middle" font-size="15.5" font-weight="bold" fill="#10343e" letter-spacing=".3">GeoSphere</text>
<text x="1238" y="1389" text-anchor="middle" font-size="16" fill="#163a44">Austria</text>
</svg>
</body></html>
